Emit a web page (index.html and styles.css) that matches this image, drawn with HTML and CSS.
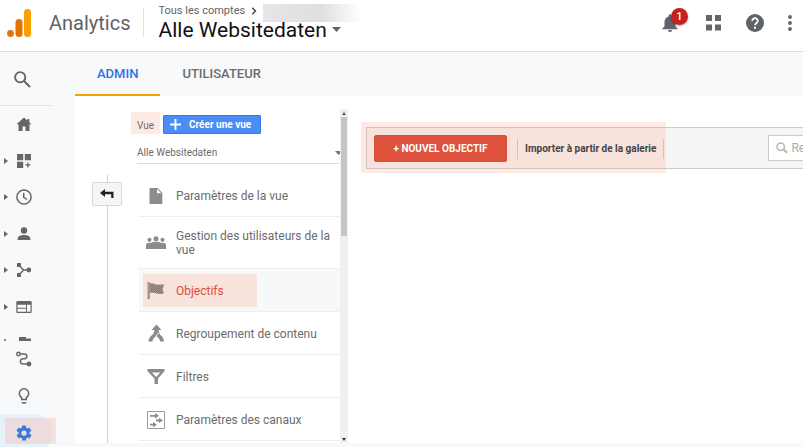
FILE: index.html
```html
<!DOCTYPE html>
<html lang="fr">
<head>
<meta charset="utf-8">
<meta name="viewport" content="width=device-width, initial-scale=1">
<title>Analytics</title>
<link rel="stylesheet" href="styles.css">
</head>
<body>
<header class="topbar">
  <svg class="logo" width="24" height="28" viewBox="0 0 24 28" aria-hidden="true">
    <rect x="17" y="0" width="7" height="28" rx="3.5" fill="#f9a000"/>
    <rect x="8.500" y="10" width="7" height="18" rx="3.500" fill="#e37400"/>
    <circle cx="3.500" cy="24.500" r="3.400" fill="#e37400"/>
  </svg>
  <span class="brand">Analytics</span>
  <div class="account">
    <div class="crumbs">
      <a href="#comptes">Tous les comptes</a>
      <svg width="6" height="8" viewBox="0 0 6 8" aria-hidden="true"><path d="M1.200.8 4.500 4 1.200 7.200" fill="none" stroke="#3c4043" stroke-width="1.400"/></svg>
      <span class="redacted"></span>
    </div>
    <button class="property" type="button">Alle Websitedaten
      <svg width="9" height="5" viewBox="0 0 9 5" aria-hidden="true"><path d="M0 0h9L4.500 5z" fill="#5f6368"/></svg>
    </button>
  </div>
  <div class="tools">
    <button class="icon-btn bell" type="button" aria-label="Notifications">
      <svg width="16" height="18" viewBox="0 0 16 18"><path d="M8 18a2 2 0 0 0 2-2H6a2 2 0 0 0 2 2zm5.500-5.500V8c0-2.800-1.500-5-4.200-5.600V1.600a1.300 1.300 0 0 0-2.600 0v.8C4 3 2.500 5.200 2.500 8v4.500L.5 14.300v.9h15v-.9z" fill="#5f6368"/></svg>
      <span class="badge">1</span>
    </button>
    <button class="icon-btn" type="button" aria-label="Applications">
      <svg width="16" height="16" viewBox="0 0 16 16"><path d="M0 0h6v6H0zM9 0h6v6H9zM0 9.500h6v6H0zM9 9.500h6v6H9z" fill="#666"/></svg>
    </button>
    <button class="icon-btn" type="button" aria-label="Aide">
      <svg width="18" height="18" viewBox="0 0 18 18"><circle cx="9" cy="9" r="9" fill="#5f6368"/><path d="M6.200 7A2.800 2.800 0 1 1 11.800 7c0 1.900-2.700 2.100-2.700 4.300" fill="none" stroke="#fff" stroke-width="1.800"/><path d="M8.100 12.800h1.900v1.900H8.100z" fill="#fff"/></svg>
    </button>
    <button class="icon-btn" type="button" aria-label="Plus">
      <svg width="4" height="16" viewBox="0 0 4 16"><g fill="#5f6368"><circle cx="2" cy="2" r="1.900"/><circle cx="2" cy="8" r="1.900"/><circle cx="2" cy="14" r="1.900"/></g></svg>
    </button>
  </div>
</header>

<div class="layout">
  <nav class="sidebar" aria-label="Navigation">
    <button class="side-search" type="button" aria-label="Rechercher">
      <svg width="17" height="17" viewBox="0 0 17 17"><circle cx="6.200" cy="6.200" r="5.100" fill="none" stroke="#666" stroke-width="1.900"/><path d="m10 10 6 6" stroke="#666" stroke-width="2.100"/></svg>
    </button>
    <div class="side-list">
      <a href="#accueil" aria-label="Accueil">
        <svg class="glyph" viewBox="0 0 16 16"><path d="M8 1.500.5 8.200H2.500V15h4v-4.500h3V15h4V8.200h2L13.300 6.200V3h-2v1.400z"/></svg>
      </a>
      <a class="more" href="#personnalisation" aria-label="Personnalisation">
        <svg class="glyph" viewBox="0 0 16 16"><path d="M1 1h6.200v6.200H1zM8.800 1H15v6.200H8.800zM1 8.800h6.200V15H1zM11.200 9.500h1.300v1.800h1.800v1.300h-1.800v1.800h-1.300v-1.800H9.400v-1.300h1.800z"/></svg>
      </a>
      <a class="more" href="#temps-reel" aria-label="Temps réel">
        <svg class="glyph line" viewBox="0 0 16 16"><circle cx="8" cy="8" r="7.100"/><path d="M7.700 3.800v4.500l3.300 2.200"/></svg>
      </a>
      <a class="more" href="#audience" aria-label="Audience">
        <svg class="glyph" viewBox="0 0 16 16"><circle cx="8" cy="4.500" r="3.200"/><path d="M1.700 14v-1.700C1.700 10.200 5 9 8 9s6.300 1.200 6.300 3.300V14z"/></svg>
      </a>
      <a class="more" href="#acquisition" aria-label="Acquisition">
        <svg class="glyph" viewBox="0 0 16 16"><path d="M1 1h4v4H1zM1 11h4v4H1z"/><circle cx="12.800" cy="8" r="2.400"/><path class="stroke" d="M3 3l4.500 5L3 13M7.500 8H13"/></svg>
      </a>
      <a class="more" href="#comportement" aria-label="Comportement">
        <svg class="glyph" viewBox="0 0 16 16"><path fill-rule="evenodd" d="M1.500 2h13a1.200 1.200 0 0 1 1.200 1.200v9.600a1.200 1.200 0 0 1-1.200 1.200h-13A1.200 1.200 0 0 1 .3 12.800V3.200A1.200 1.200 0 0 1 1.500 2zM1.500 5.800v2.900h8.500V5.800zm0 3.900v3h8.500v-3zm9.500-3.900v6.900h3.500V5.800z"/></svg>
      </a>
    </div>
    <div class="side-cut">
      <svg width="2" height="2" viewBox="0 0 2 2" aria-hidden="true"><path d="M0 0h2v2H0z" fill="#888"/></svg>
      <svg width="12" height="4" viewBox="0 0 12 4" aria-hidden="true"><path d="M0 0h7v1.500h5V4H0z" fill="#666"/></svg>
    </div>
    <div class="side-foot">
      <a href="#attribution" aria-label="Attribution">
        <svg class="glyph line" viewBox="0 0 16 16"><circle cx="2.500" cy="3" r="1.700"/><path d="M4.200 3h4.300a2.300 2.300 0 0 1 0 4.700H7a2.600 2.600 0 0 0 0 5.300h4"/><circle cx="13" cy="13" r="1.700" fill="#666"/></svg>
      </a>
      <a href="#decouvrir" aria-label="Découvrir">
        <svg class="glyph line" viewBox="0 0 16 16"><path d="M5.700 11.500V9.600a4.700 4.700 0 1 1 4.600 0v1.900zM5.700 14.800h4.600"/></svg>
      </a>
      <a class="current" href="#admin" aria-label="Administration">
        <svg class="glyph gear" viewBox="0 0 24 24"><path d="M19.400 13c0-.3.100-.6.100-1s0-.7-.1-1l2.100-1.600c.2-.2.300-.4.100-.7l-2-3.400c-.1-.2-.4-.3-.6-.2l-2.500 1a7 7 0 0 0-1.700-1l-.4-2.700a.5.500 0 0 0-.5-.4h-4c-.2 0-.4.200-.5.400l-.4 2.700c-.6.200-1.200.6-1.700 1l-2.500-1c-.2-.1-.5 0-.6.200l-2 3.400c-.1.300-.1.500.1.700L4.600 11a8 8 0 0 0 0 2l-2.100 1.600c-.2.200-.3.400-.1.700l2 3.400c.1.200.4.300.6.200l2.500-1c.5.400 1.100.8 1.700 1l.4 2.700c0 .2.200.4.500.4h4c.2 0 .5-.2.500-.4l.4-2.700c.6-.2 1.200-.6 1.700-1l2.500 1c.2.100.5 0 .6-.2l2-3.400c.1-.3.100-.5-.1-.7zM12 15.500a3.500 3.500 0 1 1 0-7 3.500 3.500 0 0 1 0 7z"/></svg>
      </a>
    </div>
  </nav>

  <main class="main">
    <nav class="tabs" aria-label="Sections">
      <a class="tab active" href="#admin">ADMIN</a>
      <a class="tab" href="#utilisateur">UTILISATEUR</a>
    </nav>
    <div class="content">
      <div class="rail">
        <button class="back" type="button" aria-label="Retour">
          <svg width="14" height="10" viewBox="0 0 14 10"><path d="M5 0v2.700h8.500V9h-2.300V5.200H5V8L0 4z" fill="#222"/></svg>
        </button>
      </div>
      <section class="view">
        <div class="view-body">
          <div class="view-head">
            <label class="mark" for="vue">Vue</label>
            <button class="create" type="button">
              <svg width="11" height="11" viewBox="0 0 11 11" aria-hidden="true"><path d="M4.600 0h1.800v4.600H11v1.800H6.400V11H4.600V6.400H0V4.600h4.600z" fill="#fff"/></svg>
              Créer une vue
            </button>
          </div>
          <div class="picker">
            <select id="vue"><option>Alle Websitedaten</option></select>
            <svg width="5" height="4" viewBox="0 0 5 4" aria-hidden="true"><path d="M0 0h7L3.500 4z" fill="#777"/></svg>
          </div>
          <ul class="menu">
            <li><a href="#parametres">
              <svg class="pic" viewBox="0 0 20 20"><path fill-rule="evenodd" d="M4.500 2h7l4.800 4.800V18H3.500V3a1 1 0 0 1 1-1zM11 3v4.300h4.300z"/></svg>
              <span>Paramètres de la vue</span></a></li>
            <li class="tall"><a href="#utilisateurs">
              <svg class="pic" viewBox="0 0 20 20"><circle cx="3.500" cy="6.800" r="2.100"/><circle cx="10" cy="5.800" r="2.500"/><circle cx="16.500" cy="6.800" r="2.100"/><path d="M0 16v-3.800C0 10 2.500 9.500 4.500 10 6 9 8 8.700 10 8.700s4 .3 5.500 1.300c2-.5 4.500 0 4.500 2.200V16z"/></svg>
              <span>Gestion des utilisateurs de la vue</span></a></li>
            <li class="selected"><a href="#objectifs">
              <svg class="pic" viewBox="0 0 20 20">
                <defs><pattern id="weave" width="2" height="2" patternUnits="userSpaceOnUse"><path d="M0 0h2v2H0z" fill="#a3958d"/><path d="M0 0h1v1H0zM1 1h1v1H1z" fill="#82776f"/></pattern></defs>
                <path fill="#a3958d" d="M1.500 1H4v17H1.500z"/><path fill="url(#weave)" d="M4 2.500c3-1 5 1.300 8 1.200 2-.1 4-.3 6.300-.2L16.500 8l1.500 4.500c-4 .7-6 .3-8-.2-2-.6-4-.8-6-.3z"/></svg>
              <span>Objectifs</span></a></li>
            <li><a href="#regroupement">
              <svg class="pic" viewBox="0 0 20 20"><path d="M10.500.5 15.500 6h-2.800c0 2.800.8 4 2.600 5.800 1.500 1.500 2.500 2.800 2.700 5.700h-4c-.1-1.700-.6-2.500-1.800-3.700-.8-.8-1.500-1.500-2-2.300-.4.800-1 1.500-1.800 2.300-1.200 1.200-1.800 2-2 3.700H2.500c.2-2.900 1.300-4.200 2.800-5.700C7.400 9.700 8.300 8.800 8.300 6H5.500z"/><path d="m10 11.800 2.800-2.800" stroke="#fff"/></svg>
              <span>Regroupement de contenu</span></a></li>
            <li><a href="#filtres">
              <svg class="pic" viewBox="0 0 20 20"><path fill-rule="evenodd" d="M1.500 2h17v2.200L12 11.500V17H8.500v-5.500L1.500 4.200zM6 5.500l4.200 4.600 4-4.600z"/></svg>
              <span>Filtres</span></a></li>
            <li><a href="#canaux">
              <svg class="pic" viewBox="0 0 20 20"><path fill="none" stroke="#999" d="M1.500 1.500h17v17h-17z"/><path d="M4 5h5V3l4 2.800-4 2.700V6.800H4zM10 9.500h3V7.700l4 2.700-4 2.700v-1.700h-3zM4 13.700h3V12l4 2.700-4 2.600v-1.700H4z"/></svg>
              <span>Paramètres des canaux</span></a></li>
          </ul>
        </div>
        <div class="scroll" aria-hidden="true">
          <svg width="4" height="3" viewBox="0 0 4 3"><path d="M0 3 2 0l2 3z" fill="#555"/></svg>
          <div class="thumb"></div>
          <svg width="4" height="3" viewBox="0 0 4 3"><path d="M0 0h4L2 3z" fill="#333"/></svg>
        </div>
      </section>
      <section class="goals">
        <div class="goal-bar">
          <div class="goal-actions">
            <button class="new-goal" type="button">+ NOUVEL OBJECTIF</button>
            <button class="import" type="button">Importer à partir de la galerie</button>
          </div>
          <div class="find">
            <svg width="12" height="12" viewBox="0 0 12 12" aria-hidden="true"><circle cx="4.700" cy="4.700" r="3.700" fill="none" stroke="#b8b8b8" stroke-width="1.600"/><path d="m7.500 7.500 3.700 3.300" stroke="#b8b8b8" stroke-width="2.200"/></svg>
            <input type="search" placeholder="Rechercher" aria-label="Rechercher">
          </div>
        </div>
      </section>
    </div>
  </main>
</div>
</body>
</html>
```
FILE: styles.css
```css
* { box-sizing: border-box; }

body {
  margin: 0;
  height: 100vh;
  display: flex;
  flex-direction: column;
  overflow: hidden;
  background: #f8f9fa;
  color: #6c6c6c;
  font: 12px/14px Roboto, "Liberation Sans", sans-serif;
}

a { color: inherit; text-decoration: none; }
svg { flex: none; display: block; }
button {
  display: flex;
  align-items: center;
  padding: 0;
  border: 0;
  background: none;
  color: inherit;
  font: inherit;
  cursor: pointer;
}

/* Top bar */
.topbar {
  flex: none;
  display: flex;
  align-items: center;
  height: 52px;
  padding: 0 11px 6px 7px;
  border-bottom: 1px solid #dadce0;
  background: #fff;
}
.brand {
  margin-left: 18px;
  color: #5f6368;
  font-size: 20px;
  line-height: 28px;
}
.account {
  margin-left: 12px;
  padding-left: 15px;
  border-left: 1px solid #e0e0e0;
  height: 29px;
  display: flex;
  flex-direction: column;
  justify-content: center;
}
.crumbs {
  display: flex;
  align-items: center;
  gap: 6px;
  color: #5f6368;
  font-size: 11px;
}
.redacted {
  width: 98px;
  height: 18px;
  margin-bottom: -4px;
  background: linear-gradient(90deg, #e6e6e8, #dfdfe1 60%, #fff);
}
.property {
  gap: 5px;
  color: #111;
  font-size: 21px;
  line-height: 24px;
}
.tools {
  display: flex;
  align-items: center;
  gap: 24px;
  margin-left: auto;
}
.icon-btn { position: relative; }
.bell { margin-right: 4px; }
.badge {
  position: absolute;
  left: 9px;
  top: -6px;
  width: 17px;
  height: 17px;
  border-radius: 50%;
  background: #c5221f;
  box-shadow: 0 1px 2px rgba(0, 0, 0, .35);
  color: #fff;
  font-size: 11px;
  font-weight: 500;
  line-height: 17px;
  text-align: center;
}

.layout { flex: 1; display: flex; min-height: 0; }

/* Side navigation */
.sidebar { flex: none; width: 75px; }
.side-search {
  width: 53px;
  height: 54px;
  padding: 2px 0 0 14px;
  border-bottom: 1px solid #e4e5e7;
}
.side-list, .side-foot { display: grid; grid-auto-rows: 1fr; }
.side-list { height: 219px; }
.side-foot { height: 110px; }
.side-list a, .side-foot a {
  position: relative;
  display: flex;
  align-items: center;
  padding-left: 16px;
}
.more::before {
  content: "";
  position: absolute;
  left: 4px;
  border: solid transparent;
  border-width: 3px 0 3px 4px;
  border-left-color: #666;
}
.glyph { width: 16px; height: 16px; fill: #666; }
.glyph.line { fill: none; stroke: #666; stroke-width: 1.5; }
.glyph .stroke { fill: none; stroke: #666; stroke-width: 1.5; }
.glyph.gear { width: 18px; height: 18px; margin-left: -1px; fill: #3b78d8; }
.side-cut {
  display: flex;
  align-items: flex-end;
  gap: 13px;
  height: 16px;
  padding-left: 4px;
}
.side-foot .current {
  width: 53px;
  border-radius: 0 18px 18px 0;
  background: #e6f1fc;
}
.current::before {
  content: "";
  position: absolute;
  left: 5px;
  top: 4px;
  width: 51px;
  height: 26px;
  background: rgba(248, 190, 180, .42);
}
.current .glyph { position: relative; }

/* Tabs */
.main {
  flex: 1;
  min-width: 0;
  display: flex;
  flex-direction: column;
  padding-bottom: 4px;
}
.tabs { flex: none; display: flex; height: 44px; }
.tab {
  padding: 0 22px;
  border-bottom: 2px solid transparent;
  font-size: 13px;
  font-weight: 500;
  line-height: 44px;
}
.tab.active { border-color: #f9a000; color: #2a73e8; }

.content { flex: 1; display: flex; min-height: 0; background: #fff; }

/* Back rail */
.rail {
  flex: none;
  width: 56px;
  margin-top: 79px;
  padding: 7px 9px 0 17px;
  background: linear-gradient(#d0d0d0, #d0d0d0) 32px 0 / 1px 100% no-repeat;
}
.back {
  justify-content: center;
  width: 30px;
  height: 24px;
  border: 1px solid #d8d8d8;
  border-radius: 2px;
  background: #f5f5f5;
}

/* View column */
.view { flex: none; display: flex; width: 217px; margin-top: 13px; }
.view-body { flex: 1; min-width: 0; overflow: hidden; }
.view-head { display: flex; align-items: center; gap: 3px; margin-top: 2px; }
.mark {
  width: 29px;
  padding: 7px 0 1px 6px;
  background: #fdeae4;
  font-size: 10px;
}
.create {
  gap: 8px;
  height: 19px;
  padding: 0 9px 0 6px;
  margin-top: 4px;
  border: 1px solid #3079ed;
  border-radius: 1px;
  background: #4a8df8;
  color: #fff;
  font-size: 10px;
  font-weight: 700;
}
.picker {
  display: flex;
  align-items: center;
  height: 24px;
  margin: 6px 0 0 6px;
  padding-top: 2px;
  border-bottom: 1px solid #ddd;
}
.picker select {
  flex: 1;
  min-width: 0;
  padding: 0;
  border: 0;
  appearance: none;
  background: none;
  color: #6c6c6c;
  font: inherit;
  font-size: 10px;
}
.menu { margin: 10px 0 0 8px; padding: 0; list-style: none; }
.menu li { height: 43px; padding: 5px 4px 4px; border-bottom: 1px solid #eee; }
.menu .tall { height: 52px; }
.menu a {
  display: flex;
  align-items: center;
  gap: 10px;
  height: 100%;
  padding-left: 3px;
}
.menu .selected { background: #f7f8f8; color: #dd4b39; }
.selected a { width: 114px; background: #f9e3dd; }
.pic { width: 20px; height: 20px; fill: #8c8c8c; }

.scroll {
  flex: none;
  display: flex;
  flex-direction: column;
  align-items: center;
  width: 8px;
  padding: 3px 0 2px;
  background: #f0f0f0;
}
.thumb { width: 6px; height: 119px; margin: 2px 0 auto; background: #c5c5c5; }

/* Goals panel */
.goals { flex: 1; min-width: 0; padding: 26px 0 0 13px; overflow: hidden; }
.goal-bar {
  display: flex;
  align-items: center;
  width: 560px;
  height: 51px;
  background: linear-gradient(#f5f5f5, #f5f5f5) 0 5px / 100% 42px no-repeat;
}
.goal-actions {
  flex: none;
  position: relative;
  display: flex;
  align-items: center;
  gap: 10px;
  height: 51px;
  padding: 2px 2px 0 13px;
  background: #fdeae4;
}
.goal-actions::before {
  content: "";
  position: absolute;
  inset: 5px 0 4px 5px;
  border: solid #d3c1bb;
  border-width: 1px 0 1px 1px;
  background: #f7e2dc;
}
.goal-actions > * { position: relative; }
.new-goal {
  justify-content: center;
  width: 133px;
  height: 27px;
  border: 1px solid #d4513e;
  border-radius: 2px;
  background: #dd513d;
  color: #fff;
  font-size: 10px;
  font-weight: 700;
}
.import {
  height: 20px;
  padding: 0 7px;
  border: solid #d3c1bb;
  border-width: 0 1px;
  color: #444;
  font-size: 10px;
  font-weight: 700;
}
.find {
  flex: 1;
  display: flex;
  align-items: center;
  height: 42px;
  padding-left: 102px;
  border: solid #ccc;
  border-width: 1px 0;
}
.find svg { margin: 0 -20px 0 8px; z-index: 1; }
.find input {
  flex: 1;
  min-width: 0;
  height: 26px;
  padding: 0 0 0 22px;
  border: 1px solid #ccc;
  background: #fff;
  font: inherit;
}
.find input::placeholder { color: #aaa; }
```
